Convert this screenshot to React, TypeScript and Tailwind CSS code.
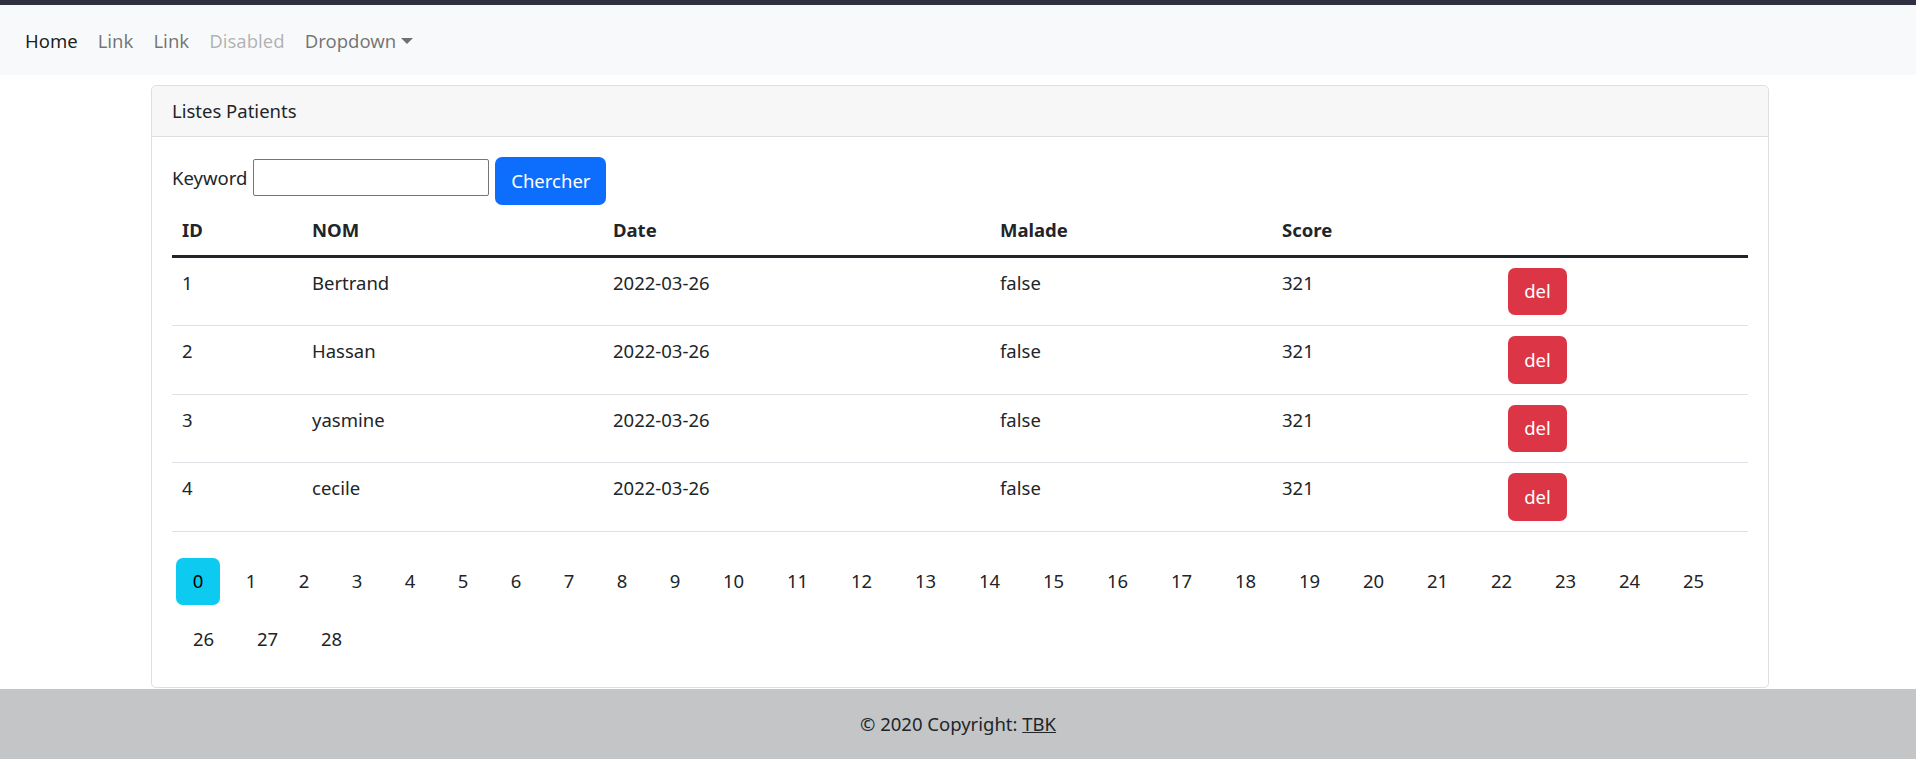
import React from 'react';

interface Patient {
  id: number;
  nom: string;
  date: string;
  malade: boolean;
  score: number;
}

const patients: Patient[] = [
  { id: 1, nom: 'Bertrand', date: '2022-03-26', malade: false, score: 321 },
  { id: 2, nom: 'Hassan', date: '2022-03-26', malade: false, score: 321 },
  { id: 3, nom: 'yasmine', date: '2022-03-26', malade: false, score: 321 },
  { id: 4, nom: 'cecile', date: '2022-03-26', malade: false, score: 321 },
];

const pages = Array.from({ length: 29 }, (_, i) => i);
const currentPage = 0;

const NavBar: React.FC = () => {
  return (
    <nav className="h-[70px] bg-[#f8f9fa] flex items-center px-[15px] pt-[1px]">
      <a className="px-[10px] text-[rgba(0,0,0,0.9)]">Home</a>
      <a className="px-[10px] text-[rgba(0,0,0,0.55)]">Link</a>
      <a className="px-[10px] text-[rgba(0,0,0,0.55)]">Link</a>
      <a className="px-[10px] text-[rgba(0,0,0,0.3)]">Disabled</a>
      <a className="px-[10px] text-[rgba(0,0,0,0.55)] flex items-center">
        Dropdown
        <span className="inline-block ml-[5px] mt-[1px] border-t-[6px] border-x-[6px] border-x-transparent border-t-current" />
      </a>
    </nav>
  );
};

const App: React.FC = () => {
  return (
    <div
      className="bg-white text-[#212529] text-[18.5px] leading-[30px]"
      style={{ fontFamily: '"Segoe UI", "Noto Sans", "Open Sans", sans-serif' }}
    >
      <div className="h-[5px] bg-[#2f3140]" />
      <NavBar />

      <div className="pl-[151px] pr-[147px] pt-[10px]">
        <div className="border border-[#dfdfdf] rounded-[5px]">
          <div className="h-[51px] bg-[#f7f7f7] border-b border-[#dfdfdf] px-[20px] flex items-center rounded-t-[5px]">
            Listes Patients
          </div>

          <div className="p-[20px]">
            {/* search form */}
            <form className="flex items-start" onSubmit={(e) => e.preventDefault()}>
              <label className="mt-[6px]">Keyword</label>
              <input
                type="text"
                className="ml-[6px] mt-[2px] w-[236px] h-[37px] border border-[#767676] rounded-[2px] px-[3px] text-[16px]"
              />
              <button
                type="submit"
                className="ml-[6px] h-[47.5px] w-[111px] bg-[#0d6efd] text-white rounded-[7px]"
              >
                Chercher
              </button>
            </form>

            <table className="w-full table-fixed border-collapse mb-[16px]">
              <colgroup>
                <col className="w-[130px]" />
                <col className="w-[301px]" />
                <col className="w-[387px]" />
                <col className="w-[282px]" />
                <col className="w-[226px]" />
                <col />
              </colgroup>
              <thead>
                <tr>
                  <th className="text-left font-bold px-[10px] py-[10px] border-b-[3px] border-[#212529]">ID</th>
                  <th className="text-left font-bold px-[10px] py-[10px] border-b-[3px] border-[#212529]">NOM</th>
                  <th className="text-left font-bold px-[10px] py-[10px] border-b-[3px] border-[#212529]">Date</th>
                  <th className="text-left font-bold px-[10px] py-[10px] border-b-[3px] border-[#212529]">Malade</th>
                  <th className="text-left font-bold px-[10px] py-[10px] border-b-[3px] border-[#212529]">Score</th>
                  <th className="px-[10px] py-[10px] border-b-[3px] border-[#212529]"></th>
                </tr>
              </thead>
              <tbody>
                {patients.map((p) => (
                  <tr key={p.id}>
                    <td className="align-top px-[10px] py-[10px] border-b border-[#dee2e6]">{p.id}</td>
                    <td className="align-top px-[10px] py-[10px] border-b border-[#dee2e6]">{p.nom}</td>
                    <td className="align-top px-[10px] py-[10px] border-b border-[#dee2e6]">{p.date}</td>
                    <td className="align-top px-[10px] py-[10px] border-b border-[#dee2e6]">{String(p.malade)}</td>
                    <td className="align-top px-[10px] py-[10px] border-b border-[#dee2e6]">{p.score}</td>
                    <td className="align-top px-[10px] py-[10px] border-b border-[#dee2e6]">
                      <button className="h-[47.5px] w-[59px] bg-[#dc3545] text-white rounded-[7px]">del</button>
                    </td>
                  </tr>
                ))}
              </tbody>
            </table>

            {/* pagination */}
            <ul className="flex flex-wrap gap-x-[9px] gap-y-[10px] pl-[4px] pt-[10px] mb-[4px]">
              {pages.map((n) => (
                <li key={n}>
                  <a
                    className={
                      'h-[47.5px] flex items-center justify-center rounded-[7px] ' +
                      (n < 10 ? 'w-[44px] ' : 'w-[55px] ') +
                      (n === currentPage ? 'bg-[#0dcaf0] text-black' : 'text-[#212529]')
                    }
                  >
                    {n}
                  </a>
                </li>
              ))}
            </ul>
          </div>
        </div>
      </div>

      <footer className="mt-[1px] h-[70px] bg-[#c4c5c7] flex items-center justify-center">
        <span>
          © 2020 Copyright: <a className="underline text-[#212529]">TBK</a>
        </span>
      </footer>
    </div>
  );
};

export default App;
